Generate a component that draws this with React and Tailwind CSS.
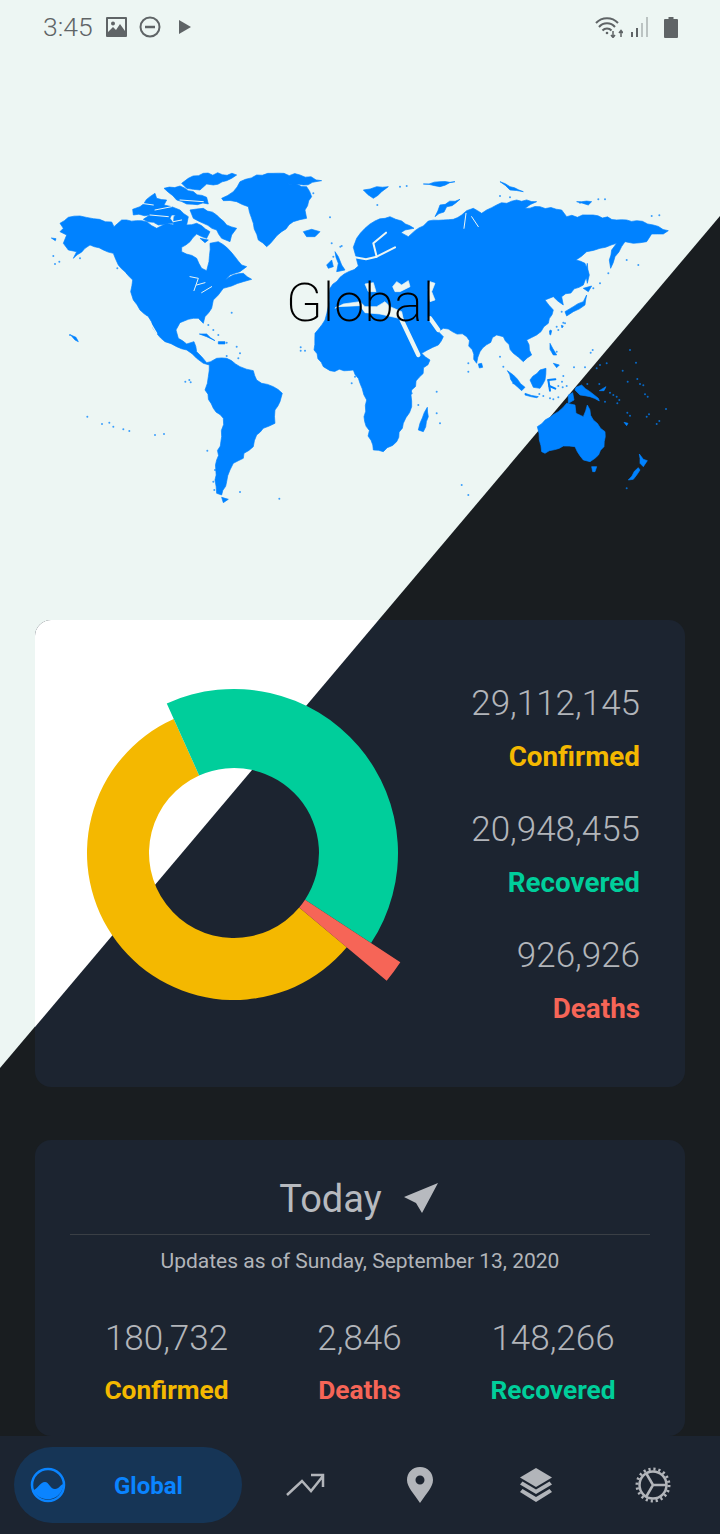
const LIGHT = '#EDF6F3';
const BLUE = '#0082FF';

// traced against a 3x crop, hence the scale(1/3) groups around them
const AMERICAS = [
  '60,190 85,172 120,168 160,176 215,186 222,200 245,180 290,182 320,185 350,205 380,190 400,195 402,170 420,150 445,170 440,195 470,190 510,215 500,235 470,222 450,245 425,262 425,275 470,295 485,325 500,332 507,305 510,250 535,245 560,262 585,290 605,315 620,320 600,335 570,345 555,360 580,345 610,340 635,358 610,365 575,378 550,385 535,405 520,420 515,445 495,470 490,490 475,475 445,478 420,488 408,510 415,535 440,552 462,545 470,575 485,590 500,608 512,605 530,595 560,595 600,620 640,632 650,660 665,670 700,680 727,700 720,725 705,750 705,790 670,805 650,825 640,860 612,880 610,895 580,910 570,930 560,965 545,1005 530,1000 525,960 530,900 545,830 550,775 520,745 495,690 505,650 508,615 490,610 470,595 440,570 410,560 375,545 350,520 325,470 300,450 280,420 272,395 278,360 255,335 235,315 220,280 190,270 150,255 135,265 100,295 110,275 85,270 70,250 80,225 60,215 70,205',
  '450,150 490,145 530,165 560,195 590,205 575,225 570,245 545,235 530,210 490,190 460,175',
  '278,148 300,140 330,110 345,100 350,115 380,120 372,135 395,140 420,150 410,165 395,165 390,175 400,190 355,195 310,178 330,165 280,165',
  '445,55 490,40 590,45 560,62 520,75 500,72 480,90 440,85 425,70',
  '372,85 420,78 445,92 500,112 505,132 440,132 410,120',
  '480,235 505,240 495,248',
  '545,115 580,95 600,65 650,45 700,40 780,45 845,62 790,75 740,70 800,80 815,110 795,150 800,175 760,185 725,215 700,240 680,260 655,240 640,190 625,140 590,125 550,122',
  '790,215 815,208 840,215 825,230 800,230',
  '478,522 500,522 525,542 500,530',
  '535,545 555,545 555,552 535,552',
  '545,1012 565,1018 550,1028',
  '92,525 108,532 115,545 105,540',
  '34,234 48,236 46,242',
];

const EURASIA = [
  // eurasia and africa as one shape, the seas are laid over it
  '0,352 55,318 48,290 40,262 50,235 75,205 105,183 150,170 185,183 222,205 195,210 183,218 205,230 225,212 250,198 265,183 310,180 340,178 365,165 380,152 400,145 425,160 440,150 470,135 530,120 590,125 555,145 600,140 665,150 680,170 760,165 830,180 890,182 940,195 985,212 970,222 935,222 920,245 880,250 855,245 825,290 812,325 808,300 815,270 830,250 780,265 740,275 708,300 735,310 745,345 730,375 665,410 670,435 640,410 615,420 640,450 625,490 590,525 560,540 575,585 550,605 520,580 490,530 470,525 420,575 410,610 380,530 310,505 295,515 310,530 295,555 245,580 270,600 215,690 215,740 190,790 170,845 130,875 100,870 72,770 80,720 60,670 40,630 -30,632 -50,620 -78,570 -75,520 -45,480 -35,440 -30,385',
  '240,790 262,742 265,770 250,815 235,810',
  '285,170 360,118 300,135',
  '70,90 110,80 145,80 125,95 100,115',
  '250,72 300,65 345,65 300,80',
  '480,65 510,80 550,95 510,90',
  '710,125 755,125 745,135',
  '415,612 425,610 428,622 418,624',
  '675,455 700,440 730,425 740,405 735,435 700,455 680,468',
  '730,385 755,378 745,395',
  '742,310 748,345 742,370 738,345',
  '-40,315 -25,300 -20,320 -35,325',
  '-15,275 -5,290 5,315 15,330 -10,335 -5,310',
];

const SEAS = [
  '-15,445 10,432 60,425 75,440 110,440 135,425 150,440 185,455 190,478 120,462 75,458 60,437 -10,440',
  '75,372 100,368 108,395 85,395',
  '158,380 170,365 185,375 205,362 210,380 180,395 165,395',
  '270,365 285,370 275,395 285,420 270,425 265,390',
];

const SEA_LINES = [
  'M45 292L78 298L110 290L165 262',
  'M110 290L100 250L138 218',
  'M372 205L378 160',
  'M395 170L415 200',
  'M185 480L235 585',
  'M270 475L295 510',
];

const SE_ASIA = [
  '22,212 40,225 75,262 65,272 40,250',
  '75,280 115,290 110,293 75,285',
  '120,210 138,205 135,240 120,265 100,262 90,240',
  '150,130 158,145 170,165 160,165 150,148',
  '160,190 178,195 170,203',
  '150,90 155,92 152,105 149,103',
  '184,76 190,78 186,84',
  '228,262 245,255 270,275 295,295 298,303 270,290 240,285 225,270',
  '205,285 218,278 222,300 205,310',
  '112,380 150,352 175,335 200,310 225,315 228,340 250,350 262,315 280,360 315,395 312,440 285,475 270,485 250,480 232,455 225,440 190,438 135,460 125,455 118,420',
  '275,500 290,500 285,515 278,515',
  '418,462 430,478 442,482 430,500 420,490',
  '415,503 420,510 400,538 385,540',
  '372,367 384,370 380,377',
  '298,272 318,260 312,272',
];

const SULAWESI = ['M145 240L150 272', 'M145 240L166 238', 'M148 258L166 266'];

const DOTS_A = [
  [90,525],[186,792],[208,788],[220,800],[250,808],[268,813],[345,825],[372,822],[142,770],[436,665],[448,660],[452,667],[502,872],[600,996],[718,1016],[782,562],[795,572],[782,572],[575,458],[505,495],[520,510],[535,525],[560,548],[590,560],[600,580],[595,595],[560,588],[525,930],[520,965],[523,990],[870,172],[875,250],[905,258],[880,290],[230,295],[232,325],[262,340],[45,312],[58,305],[40,288],[120,295],[490,240],[515,195],[640,180],[820,100],
];
const DOTS_Z8 = [
  [390,150],[408,188],[368,212],[412,237],[420,252],[430,256],[435,283],[443,290],[383,245],[350,290],[340,285],[330,278],[358,300],[352,310],[382,338],[390,347],[440,350],[447,343],[470,372],[478,363],[498,327],[290,205],[300,195],[320,190],[278,150],[272,158],[222,202],[255,202],[190,228],[186,245],[175,258],[188,262],[200,258],[150,295],[130,288],[160,298],[175,292],[118,282],[380,565],[40,250],[10,200],[170,80],[185,35],[190,68],[160,160],[170,155],[315,305],[262,252],[298,252],
];
const DOTS_B = [
  [480,590],[385,610],[385,635],[290,695],[235,735],[300,790],[290,760],[365,975],[385,1005],[45,650],[35,670],[215,700],[860,300],[895,315],[805,340],[780,370],[760,385],[630,515],[655,510],[675,490],[315,375],[112,135],[180,80],[200,78],[480,108],[510,112],[720,128],[775,118],[795,118],[935,168],[958,166],[1,260],
];

// breaks up long straight runs so the coasts don't look low-poly
function roughen(points) {
  const pts = points.split(' ').map((p) => p.split(',').map(Number));
  const out = [];
  pts.forEach(([x, y], i) => {
    const [nx, ny] = pts[(i + 1) % pts.length];
    out.push(`${x},${y}`);
    const len = Math.hypot(nx - x, ny - y);
    const steps = Math.floor(len / 14);
    for (let s = 1; s < steps; s++) {
      const t = s / steps;
      const off = Math.sin(x * 3.1 + y * 1.7 + s * 2.3) * Math.min(4.5, len * 0.05);
      out.push(`${(x + (nx - x) * t - ((ny - y) / len) * off).toFixed(1)},${(y + (ny - y) * t + ((nx - x) / len) * off).toFixed(1)}`);
    }
  });
  return out.join(' ');
}

function polar(cx, cy, r, deg) {
  const a = (deg * Math.PI) / 180;
  return `${(cx + r * Math.cos(a)).toFixed(2)} ${(cy + r * Math.sin(a)).toFixed(2)}`;
}

function slice(r0, r1, from, to) {
  const large = to - from > 180 ? 1 : 0;
  return `M${polar(0, 0, r0, from)}A${r0} ${r0} 0 ${large} 1 ${polar(0, 0, r0, to)}L${polar(0, 0, r1, to)}A${r1} ${r1} 0 ${large} 0 ${polar(0, 0, r1, from)}Z`;
}

function WorldMap() {
  return (
    <svg viewBox="0 54 720 566" className="block h-[566px] w-[720px]">
      <g fill={BLUE} stroke={BLUE} strokeWidth="2" strokeLinejoin="round">
        <g transform="translate(40 160) scale(.3333)">
          {AMERICAS.map((p) => <polygon key={p} points={roughen(p)} />)}
          <g fill="none" stroke={LIGHT} strokeWidth="3" strokeLinecap="round">
            <path d="M320 470L350 520" strokeWidth="4" />
            <path d="M450 350L475 355L462 392M470 375L495 368M485 398L515 380" />
            <path d="M290 128L340 135M345 150L395 140M330 165L385 170M420 120L490 125M400 185L425 180" />
          </g>
        </g>
        <g transform="translate(340 160) scale(.3333)">
          {EURASIA.map((p) => <polygon key={p} points={roughen(p)} />)}
          {SEAS.map((p) => <polygon key={p} points={p} fill={LIGHT} stroke={LIGHT} />)}
          <g fill="none" stroke={LIGHT} strokeLinecap="round" strokeLinejoin="round">
            {SEA_LINES.map((d, i) => <path key={d} d={d} strokeWidth={i < 2 ? 6 : i < 4 ? 3 : 13} />)}
          </g>
        </g>
        <g transform="translate(500 300) scale(.3333)">
          {SE_ASIA.map((p) => <polygon key={p} points={roughen(p)} />)}
          <g fill="none" strokeWidth="6" strokeLinecap="round">
            {SULAWESI.map((d) => <path key={d} d={d} />)}
          </g>
        </g>
      </g>
      <g fill={BLUE} opacity=".75">
        {DOTS_A.map(([x, y]) => <circle key={`${x}-${y}`} cx={40 + x / 3} cy={160 + y / 3} r="1" />)}
        {DOTS_B.map(([x, y]) => <circle key={`${x}-${y}`} cx={340 + x / 3} cy={160 + y / 3} r="1" />)}
        {DOTS_Z8.map(([x, y]) => <circle key={`${x}-${y}`} cx={500 + x / 3} cy={300 + y / 3} r="1" />)}
      </g>
    </svg>
  );
}

function StatusBar() {
  return (
    <div className="flex h-[54px] items-center pl-[43px] pr-[42px] text-[#5F6466]">
      <span className="w-[50px] text-[26.500px] font-light leading-none">3:45</span>
      <svg viewBox="0 0 21 20" className="ml-[13px] h-[20px] w-[21px]" fill="currentColor">
        <path fillRule="evenodd" d="M1 0H20A1 1 0 0 1 21 1V19A1 1 0 0 1 20 20H1A1 1 0 0 1 0 19V1A1 1 0 0 1 1 0ZM2 2V15L7 10L10 13L14 7L19 14V2Z" />
        <circle cx="7" cy="6.500" r="2" />
      </svg>
      <svg viewBox="0 0 22 22" className="ml-[12px] h-[22px] w-[22px]" fill="none" stroke="currentColor" strokeWidth="2">
        <circle cx="11" cy="11" r="9.500" />
        <path d="M6 11H16" strokeWidth="2.500" />
      </svg>
      <svg viewBox="0 0 12 14" className="ml-[18px] h-[14px] w-[12px]" fill="currentColor">
        <path d="M0 0L12 7L0 14Z" />
      </svg>
      <div className="ml-auto flex items-center">
        <svg viewBox="0 0 28 22" className="h-[22px] w-[28px]" fill="none" stroke="currentColor" strokeWidth="2">
          <path d="M1 7A15 15 0 0 1 23 7M4 11A10.500 10.500 0 0 1 20 11M7.500 14.500A6 6 0 0 1 16.500 14.500" />
          <circle cx="12" cy="17" r="1.300" fill="currentColor" stroke="none" />
          <path d="M18 15V21M16 19L18 21.500L20 19M26 21V15M24 17L26 14.500L28 17" strokeWidth="1.500" />
        </svg>
        <svg viewBox="0 0 17 20" className="ml-[8px] h-[20px] w-[17px]" fill="currentColor">
          <rect x="0" y="15" width="2" height="5" />
          <rect x="5" y="11" width="2" height="9" />
          <rect x="10" y="6" width="2" height="14" fillOpacity=".35" />
          <rect x="15" y="0" width="2" height="20" fillOpacity=".35" />
        </svg>
        <svg viewBox="0 0 14 21" className="ml-[16px] h-[21px] w-[14px]" fill="currentColor">
          <path d="M4.500 0H9.500V2H13A1 1 0 0 1 14 3V20A1 1 0 0 1 13 21H1A1 1 0 0 1 0 20V3A1 1 0 0 1 1 2H4.500Z" />
        </svg>
      </div>
    </div>
  );
}

function TotalStat({ value, label, color }) {
  return (
    <div className="text-right">
      <div className="text-[35px] font-light leading-[40px] text-[#B2B5BA]">{value}</div>
      <div className={`mt-[16px] text-[27.800px] font-bold leading-[33px] ${color}`}>{label}</div>
    </div>
  );
}

function TotalsCard() {
  return (
    <section className="relative mx-[35px] flex h-[467px] shrink-0 items-start justify-between overflow-hidden rounded-2xl bg-[#1C2430]">
      <svg viewBox="0 0 650 467" className="absolute inset-0 h-[467px] w-[650px]">
        <polygon points="0,0 343.600,0 0,407" fill="#FFFFFF" />
      </svg>
      <svg viewBox="-199 -199 398 398" className="relative mt-[34px] h-[398px] w-[398px] shrink-0">
        <path d={slice(85, 147, 39.9, 245.8)} fill="#F4B800" />
        <path d={slice(85, 164, 245.8, 393.3)} fill="#00CE9B" />
        <path d={slice(85, 199, 33.3, 39.9)} fill="#F66557" />
      </svg>
      <div className="relative mr-[45px] mt-[64px] flex flex-col gap-[37px]">
        <TotalStat value="29,112,145" label="Confirmed" color="text-[#F4B800]" />
        <TotalStat value="20,948,455" label="Recovered" color="text-[#00CE9B]" />
        <TotalStat value="926,926" label="Deaths" color="text-[#F66557]" />
      </div>
    </section>
  );
}

function TodayStat({ value, label, color }) {
  return (
    <div className="text-center">
      <div className="text-[35px] font-light leading-[40px] text-[#B2B5BA]">{value}</div>
      <div className={`mt-[17px] text-[26.300px] font-bold leading-[28px] ${color}`}>{label}</div>
    </div>
  );
}

function TodayCard() {
  return (
    <section className="mx-[35px] mt-[53px] h-[296px] shrink-0 rounded-2xl bg-[#1C2430] px-[35px] pt-[36px]">
      <div className="flex h-[59px] items-start justify-center border-b border-[#3A3F45] pr-[3px]">
        <span className="text-[38px] leading-[46px] text-[#B7BABF]">Today</span>
        <svg viewBox="0 0 34 30" className="ml-[22px] mt-[7px] h-[30px] w-[34px]" fill="#B7BABF">
          <path d="M34 0L0 14L12 20L18 30Z" />
        </svg>
      </div>
      <p className="mt-[12px] text-center text-[21px] leading-[28px] text-[#B2B5BA]">
        Updates as of Sunday, September 13, 2020
      </p>
      <div className="mt-[44px] grid grid-cols-[193px_193px_194px]">
        <TodayStat value="180,732" label="Confirmed" color="text-[#F4B800]" />
        <TodayStat value="2,846" label="Deaths" color="text-[#F66557]" />
        <TodayStat value="148,266" label="Recovered" color="text-[#00CE9B]" />
      </div>
    </section>
  );
}

function BottomNav() {
  return (
    <nav className="flex h-[98px] shrink-0 items-center bg-[#1C2430] pl-[14px]">
      <div className="flex h-[76px] w-[228px] items-center rounded-full bg-[#163556]">
        <svg viewBox="0 0 36 36" className="ml-[16px] h-[36px] w-[36px]">
          <circle cx="18" cy="18" r="16" fill="none" stroke="#0A84FF" strokeWidth="2.500" />
          <path d="M3 23C7 23 10 15 15 15C19 15 20 22 25 22C29 22 31 17 33.500 17A16 16 0 0 1 3 23Z" fill="#0A84FF" />
        </svg>
        <span className="ml-[48px] pt-[1px] text-[24px] font-bold leading-none text-[#0A84FF]">Global</span>
      </div>
      <svg viewBox="0 0 40 24" className="ml-[44px] h-[24px] w-[40px]" fill="none" stroke="#B2B5BA" strokeWidth="2.500">
        <path d="M1 22L16 8L25 18L37 3M25 2H37V14" />
      </svg>
      <svg viewBox="0 0 26 36" className="ml-[81px] h-[36px] w-[26px]" fill="#B2B5BA">
        <path fillRule="evenodd" d="M13 0C21 0 26 6 26 13C26 20 19 27 13 36C7 27 0 20 0 13C0 6 5 0 13 0ZM13 8.500A4.500 4.500 0 1 0 13 17.500A4.500 4.500 0 1 0 13 8.500Z" />
      </svg>
      <svg viewBox="0 0 34 34" className="ml-[86px] h-[34px] w-[34px]" fill="#B2B5BA">
        <path d="M17 0L33 9.500L17 19L1 9.500Z" />
        <path d="M3.500 13.500L17 21.500L30.500 13.500L33 16.500L17 26L1 16.500Z" />
        <path d="M3.500 21L17 29L30.500 21L33 24L17 34L1 24Z" />
      </svg>
      <svg viewBox="0 0 36 36" className="ml-[82px] h-[36px] w-[36px]" fill="none" stroke="#B2B5BA">
        <circle cx="18" cy="18" r="13.500" strokeWidth="2.500" />
        <circle cx="18" cy="18" r="16" strokeWidth="3" strokeDasharray="2.200 2.820" />
        <path d="M18 18L11 6M18 18H31M18 18L11 30" strokeWidth="2.500" />
      </svg>
    </nav>
  );
}

export default function App() {
  return (
    <div className="relative flex h-[1534px] w-[720px] flex-col overflow-hidden bg-[#EDF6F3] font-['Roboto',sans-serif]">
      {/* the dark half of the page */}
      <svg viewBox="0 0 720 1534" className="absolute inset-0 h-[1534px] w-[720px]">
        <polygon points="720,216 720,1534 0,1534 0,1068" fill="#191D20" />
      </svg>
      <div className="relative flex h-full flex-col">
        <StatusBar />
        <div className="relative h-[566px] shrink-0">
          <WorldMap />
          <h1 className="absolute left-0 right-0 top-[219px] text-center text-[54px] font-extralight leading-[60px] text-black">
            Global
          </h1>
        </div>
        <TotalsCard />
        <TodayCard />
        <BottomNav />
      </div>
    </div>
  );
}
